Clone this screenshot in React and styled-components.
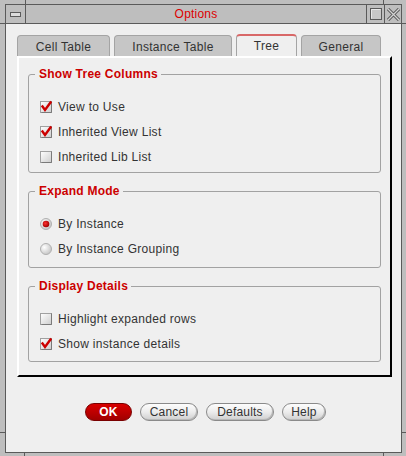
import React from 'react';
import styled, { createGlobalStyle } from 'styled-components';

const Global = createGlobalStyle`
  html, body { margin: 0; padding: 0; background: #bebebe; }
  body { font-family: "Liberation Sans", Arial, sans-serif; }
  #root { width: 406px; height: 456px; }
`;

const Frame = styled.div`
  position: relative;
  width: 406px;
  height: 456px;
  box-sizing: border-box;
  background: #bebebe;
  padding: 4px 4px 3px 5px;
  display: flex;
`;

const Tick = styled.div`
  position: absolute;
  background: #5a5a5a;
  width: ${p => (p.$v ? '1px' : '5px')};
  height: ${p => (p.$v ? '4px' : '1px')};
`;

const Inner = styled.div`
  flex: 1;
  min-width: 0;
  display: flex;
  flex-direction: column;
  border: 1px solid #5a5a5a;
`;

const TitleBar = styled.div`
  height: 18px;
  display: grid;
  grid-template-columns: 19px 1fr 18px 17px;
  border-bottom: 1px solid #5a5a5a;
  background: #bebebe;
`;

const TitleCell = styled.div`
  display: flex;
  align-items: center;
  justify-content: center;
  border-left: ${p => (p.$sep ? '1px solid #5a5a5a' : 'none')};
  color: #dd0000;
  font-size: 12px;
  letter-spacing: 0.2px;
`;

const MinIcon = styled.div`
  width: 9px;
  height: 3px;
  border: 1px solid #5a5a5a;
  background: #dcdcdc;
  margin-top: 1px;
`;

const Content = styled.div`
  flex: 1;
  background: #efefef;
  padding: 10px 9px 0 11px;
  display: flex;
  flex-direction: column;
`;

const TabRow = styled.div`
  display: flex;
  align-items: flex-end;
  gap: 4px;
  height: 22px;
`;

const Tab = styled.div`
  box-sizing: border-box;
  width: ${p => p.$w}px;
  height: ${p => (p.$active ? 22 : 21)}px;
  display: flex;
  align-items: center;
  justify-content: center;
  padding-top: ${p => (p.$active ? 0 : 1)}px;
  font-size: 12px;
  letter-spacing: 0.3px;
  color: #333;
  background: ${p => (p.$active ? '#efefef' : '#c6c6c6')};
  border: 1px solid #a4a4a4;
  border-top: ${p => (p.$active ? '2px solid #d86868' : '1px solid #a4a4a4')};
  border-bottom: none;
  border-radius: 4px 4px 0 0;
`;

const Pane = styled.div`
  box-sizing: border-box;
  height: 321px;
  border-style: solid;
  border-width: 2px;
  border-color: #ffffff #000000 #000000 #ffffff;
  padding: 9px 9px 0 9px;
  display: flex;
  flex-direction: column;
  gap: 11px;
`;

const Group = styled.fieldset`
  margin: 0;
  padding: 0 0 ${p => p.$pb}px 0;
  min-width: 0;
  border: 1px solid #a2a2a2;
  border-radius: 3px;
`;

const Legend = styled.legend`
  margin-left: 6px;
  padding: 0 3px 0 4px;
  font-size: 12px;
  line-height: 14px;
  font-weight: bold;
  letter-spacing: 0.25px;
  color: #cc0000;
`;

const Rows = styled.div`
  padding: 13px 0 0 11px;
  display: flex;
  flex-direction: column;
`;

const Row = styled.label`
  height: 25px;
  display: flex;
  align-items: center;
  gap: 6px;
  font-size: 12px;
  letter-spacing: 0.3px;
  color: #333;
`;

const Buttons = styled.div`
  margin-top: 26px;
  display: flex;
  justify-content: center;
  gap: 8px;
  padding-left: 2px;
`;

const Button = styled.div`
  box-sizing: border-box;
  width: ${p => p.$w}px;
  height: 18px;
  border-radius: 9px;
  display: flex;
  align-items: center;
  justify-content: center;
  font-size: 12px;
  letter-spacing: 0.2px;
  color: ${p => (p.$primary ? '#ffffff' : '#333')};
  font-weight: ${p => (p.$primary ? 'bold' : 'normal')};
  border: 1px solid ${p => (p.$primary ? '#7a0000' : '#8a8a8a')};
  background: ${p =>
    p.$primary
      ? 'linear-gradient(#d80000, #b80000 60%, #a00000)'
      : 'linear-gradient(#fdfdfd, #ececec 50%, #cfcfcf)'};
  box-shadow: ${p => (p.$primary ? 'none' : 'inset -1px -1px 0 #b8b8b8')};
`;

const Check = ({ on }) => (
  <svg width="12" height="13" viewBox="0 0 12 13" style={{ flex: 'none' }}>
    <defs>
      <linearGradient id="cbg" x1="0" y1="0" x2="1" y2="1">
        <stop offset="0" stopColor="#ffffff" />
        <stop offset="1" stopColor="#cdcdcd" />
      </linearGradient>
    </defs>
    <rect x="0.5" y="1.5" width="11" height="11" fill="url(#cbg)" stroke="#a0a0a0" />
    <path d="M1.5 12.5 H11.5 V1.5" fill="none" stroke="#7a7a7a" />
    {on && (
      <path d="M2.5 6.5 L5 10 L10.5 2.5" fill="none" stroke="#cc0000" strokeWidth="2.4" strokeLinecap="square" />
    )}
  </svg>
);

const Radio = ({ on }) => (
  <svg width="12" height="12" viewBox="0 0 12 12" style={{ flex: 'none' }}>
    <defs>
      <radialGradient id="rbg" cx="0.35" cy="0.35" r="0.7">
        <stop offset="0" stopColor="#ffffff" />
        <stop offset="1" stopColor="#c4c4c4" />
      </radialGradient>
      <radialGradient id="rdot" cx="0.4" cy="0.4" r="0.6">
        <stop offset="0" stopColor="#ff3030" />
        <stop offset="1" stopColor="#a00000" />
      </radialGradient>
    </defs>
    <circle cx="6" cy="6" r="5.5" fill="url(#rbg)" stroke="#b0b0b0" />
    {on && <circle cx="6" cy="6" r="3.3" fill="url(#rdot)" />}
  </svg>
);

const MaxIcon = () => (
  <svg width="12" height="12" viewBox="0 0 12 12">
    <rect x="0.5" y="0.5" width="11" height="11" fill="#c8c8c8" stroke="#5a5a5a" />
    <path d="M1.5 10.5 V1.5 H10.5" fill="none" stroke="#e8e8e8" />
  </svg>
);

const CloseIcon = () => (
  <svg width="13" height="13" viewBox="0 0 13 13">
    <path d="M1 1 L12 12 M12 1 L1 12" stroke="#5a5a5a" strokeWidth="3.2" />
    <path d="M1 1 L12 12 M12 1 L1 12" stroke="#d4d4d4" strokeWidth="1.2" />
  </svg>
);

const groups = [
  {
    title: 'Show Tree Columns',
    pb: 3,
    items: [
      { kind: 'check', label: 'View to Use', on: true },
      { kind: 'check', label: 'Inherited View List', on: true },
      { kind: 'check', label: 'Inherited Lib List', on: false },
    ],
  },
  {
    title: 'Expand Mode',
    pb: 6,
    items: [
      { kind: 'radio', label: 'By Instance', on: true },
      { kind: 'radio', label: 'By Instance Grouping', on: false },
    ],
  },
  {
    title: 'Display Details',
    pb: 5,
    items: [
      { kind: 'check', label: 'Highlight expanded rows', on: false },
      { kind: 'check', label: 'Show instance details', on: true },
    ],
  },
];

const tabs = [
  { label: 'Cell Table', w: 93 },
  { label: 'Instance Table', w: 118 },
  { label: 'Tree', w: 61, active: true },
  { label: 'General', w: 80 },
];

const buttons = [
  { label: 'OK', w: 47, primary: true },
  { label: 'Cancel', w: 58 },
  { label: 'Defaults', w: 68 },
  { label: 'Help', w: 44 },
];

export default function App() {
  return (
    <>
      <Global />
      <Frame>
        <Tick $v style={{ left: 25, top: 0 }} />
        <Tick $v style={{ left: 383, top: 0 }} />
        <Tick style={{ left: 0, top: 23 }} />
        <Tick style={{ left: 401, top: 23 }} />
        <Tick style={{ left: 0, top: 432 }} />
        <Tick style={{ left: 401, top: 432 }} />
        <Tick $v style={{ left: 24, top: 452 }} />
        <Tick $v style={{ left: 383, top: 452 }} />
        <Inner>
          <TitleBar>
            <TitleCell>
              <MinIcon />
            </TitleCell>
            <TitleCell $sep>Options</TitleCell>
            <TitleCell $sep>
              <MaxIcon />
            </TitleCell>
            <TitleCell $sep>
              <CloseIcon />
            </TitleCell>
          </TitleBar>
          <Content>
            <TabRow>
              {tabs.map(t => (
                <Tab key={t.label} $w={t.w} $active={t.active}>
                  {t.label}
                </Tab>
              ))}
            </TabRow>
            <Pane>
              {groups.map(g => (
                <Group key={g.title} $pb={g.pb}>
                  <Legend>{g.title}</Legend>
                  <Rows>
                    {g.items.map(it => (
                      <Row key={it.label}>
                        {it.kind === 'check' ? <Check on={it.on} /> : <Radio on={it.on} />}
                        {it.label}
                      </Row>
                    ))}
                  </Rows>
                </Group>
              ))}
            </Pane>
            <Buttons>
              {buttons.map(b => (
                <Button key={b.label} $w={b.w} $primary={b.primary}>
                  {b.label}
                </Button>
              ))}
            </Buttons>
          </Content>
        </Inner>
      </Frame>
    </>
  );
}
